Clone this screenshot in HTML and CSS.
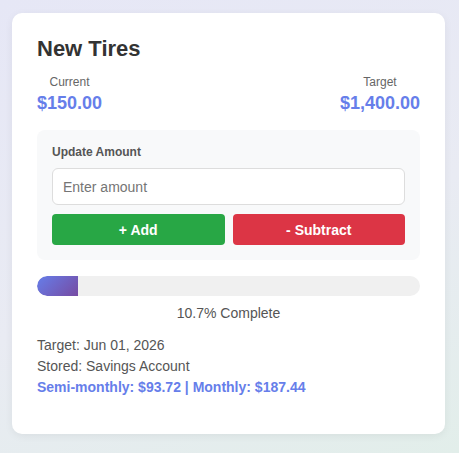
FILE: index.html
```html
<!DOCTYPE html>
<html>
<head>
<meta charset="utf-8">
<link rel="stylesheet" href="styles.css">
</head>
<body>
<div class="page">
  <div class="card">
    <h3 class="title">New Tires</h3>
    <div class="stats">
      <div class="stat">
        <div class="stat-label">Current</div>
        <div class="stat-value">$150.00</div>
      </div>
      <div class="stat">
        <div class="stat-label">Target</div>
        <div class="stat-value">$1,400.00</div>
      </div>
    </div>
    <div class="update">
      <div class="update-label">Update Amount</div>
      <input class="amount-input" type="text" placeholder="Enter amount">
      <div class="buttons">
        <button class="btn btn-add">+ Add</button>
        <button class="btn btn-sub">- Subtract</button>
      </div>
    </div>
    <div class="progress"><div class="progress-fill" style="width:10.7%"></div></div>
    <div class="progress-text">10.7% Complete</div>
    <div class="details">
      <div class="detail">Target: Jun 01, 2026</div>
      <div class="detail">Stored: Savings Account</div>
      <div class="detail-plan">Semi-monthly: $93.72 | Monthly: $187.44</div>
    </div>
  </div>
</div>
</body>
</html>
```
FILE: styles.css
```css
* { box-sizing: border-box; }
html, body { margin: 0; padding: 0; }
body {
  font-family: "Liberation Sans", Arial, sans-serif;
  width: 459px;
  height: 453px;
  overflow: hidden;
  background: linear-gradient(160deg, #e6e7f6 0%, #e9ebf3 55%, #e2eeea 100%);
}
.page {
  padding: 13px 14px 18px 12px;
}
.card {
  background: #fff;
  border-radius: 10px;
  padding: 23px 25px 36px 25px;
  box-shadow: 0 2px 8px rgba(0,0,0,0.06);
}
.title {
  margin: 0;
  font-size: 22px;
  font-weight: bold;
  color: #333;
  line-height: 25px;
}
.stats {
  display: flex;
  justify-content: space-between;
  margin-top: 14px;
}
.stat { text-align: center; }
.stat-label {
  font-size: 12px;
  color: #666;
  line-height: 14px;
  margin-bottom: 4px;
}
.stat-value {
  font-size: 18px;
  font-weight: bold;
  color: #667eea;
  line-height: 21px;
}
.update {
  margin-top: 16px;
  background: #f8f9fa;
  border-radius: 8px;
  padding: 15px;
}
.update-label {
  font-size: 12px;
  font-weight: bold;
  color: #555;
  line-height: 14px;
  margin-bottom: 9px;
}
.amount-input {
  display: block;
  width: 100%;
  height: 37px;
  border: 1px solid #ddd;
  border-radius: 6px;
  padding: 0 10px;
  font-family: inherit;
  font-size: 14px;
  color: #333;
  background: #fff;
  outline: none;
}
.amount-input::placeholder { color: #757575; }
.buttons {
  display: flex;
  gap: 8px;
  margin-top: 9px;
}
.btn {
  flex: 1;
  height: 31px;
  border: none;
  border-radius: 4px;
  color: #fff;
  font-family: inherit;
  font-size: 14px;
  font-weight: bold;
  cursor: pointer;
}
.btn-add { background: #28a745; }
.btn-sub { background: #dc3545; }
.progress {
  margin-top: 16px;
  height: 20px;
  border-radius: 10px;
  background: #f0f0f0;
  overflow: hidden;
}
.progress-fill {
  height: 100%;
  border-radius: 10px 0 0 10px;
  background: linear-gradient(135deg, #667eea 0%, #764ba2 100%);
}
.progress-text {
  text-align: center;
  font-size: 14px;
  color: #555;
  line-height: 16px;
  margin-top: 9px;
}
.details {
  margin-top: 14px;
  font-size: 14px;
  color: #555;
  line-height: 21px;
}
.detail-plan {
  font-size: 14px;
  font-weight: bold;
  color: #667eea;
}
```
